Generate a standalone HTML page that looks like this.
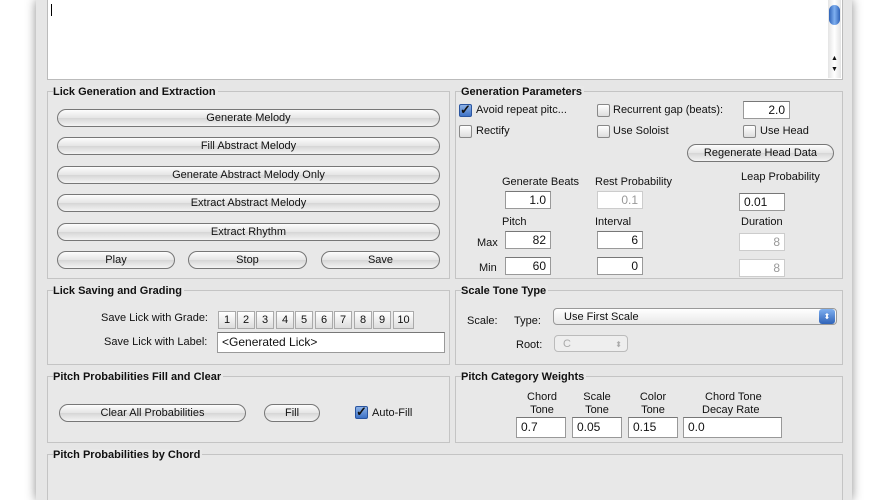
<!DOCTYPE html><html style="overflow:hidden"><head><style>
html,body{height:500px}
body{margin:0;width:888px;height:500px;overflow:hidden;background:#fff;font-family:"Liberation Sans",sans-serif;font-size:11px;color:#111;position:relative}
.a{position:absolute}
.win{left:36px;top:0;width:816px;height:500px;background:#e6e6e6;box-shadow:0 0 10px rgba(0,0,0,.45)}
.box{position:absolute;border:1px solid #c4c4c4;background:#e8e8e8;box-sizing:border-box}
.t{position:absolute;font-weight:bold;font-size:11px;background:#e8e8e8;padding-right:2px;left:5px;top:-6px}
.btn{position:absolute;height:16px;border:1px solid #777;border-radius:9px;background:linear-gradient(#fdfdfd,#e4e4e4 50%,#d6d6d6 51%,#f4f4f4);text-align:center;line-height:16px;font-size:11px}
.in{position:absolute;height:18px;background:#fff;border:1px solid #999;border-top-color:#777;box-sizing:border-box;line-height:16px;padding:0 4px;font-size:12px}
.r{text-align:right}.c{text-align:center}.dis{color:#999;border-color:#ccc}
.cb{position:absolute;width:11px;height:11px;border:1px solid #888;background:linear-gradient(#fff,#ddd);border-radius:2px}
.ck{background:linear-gradient(#8db2e6,#3d72c6);border-color:#2a55a0;color:#111;font-size:13px;line-height:9px;text-align:center;font-weight:bold}
.g{position:absolute;width:16px;height:16px;top:311px;border:1px solid #aaa;background:linear-gradient(#fff,#ddd);text-align:center;line-height:16px;font-size:11px}
</style></head><body>
<div class="a win"></div>
<div class="a" style="left:47px;top:0;width:796px;height:80px;background:#fff;border:1px solid #bbb;border-top:none;box-sizing:border-box"></div>
<div class="a" style="left:51px;top:4px;width:1px;height:12px;background:#000"></div>
<div class="a" style="left:828px;top:0;width:13px;height:78px;background:linear-gradient(90deg,#e4e4e4,#fff,#e4e4e4)"></div>
<div class="a" style="left:829px;top:5px;width:11px;height:20px;border-radius:6px;background:linear-gradient(90deg,#2f63b8,#7fb0f0,#2f63b8)"></div>
<div class="a" style="left:831px;top:55px;font-size:7px">▲</div><div class="a" style="left:831px;top:66px;font-size:7px">▼</div>

<div class="box" style="left:47px;top:91px;width:403px;height:188px"><div class="t">Lick Generation and Extraction</div></div>
<div class="btn" style="left:57px;top:109px;width:381px">Generate Melody</div>
<div class="btn" style="left:57px;top:137px;width:381px">Fill Abstract Melody</div>
<div class="btn" style="left:57px;top:166px;width:381px">Generate Abstract Melody Only</div>
<div class="btn" style="left:57px;top:194px;width:381px">Extract Abstract Melody</div>
<div class="btn" style="left:57px;top:223px;width:381px">Extract Rhythm</div>
<div class="btn" style="left:57px;top:251px;width:116px">Play</div>
<div class="btn" style="left:188px;top:251px;width:117px">Stop</div>
<div class="btn" style="left:321px;top:251px;width:117px">Save</div>

<div class="box" style="left:455px;top:91px;width:388px;height:188px"><div class="t">Generation Parameters</div></div>
<div class="cb ck" style="left:459px;top:104px">✓</div><div class="a" style="left:476px;top:104px">Avoid repeat pitc...</div>
<div class="cb" style="left:597px;top:104px"></div><div class="a" style="left:613px;top:104px">Recurrent gap (beats):</div>
<div class="in r" style="left:743px;top:101px;width:47px">2.0</div>
<div class="cb" style="left:459px;top:125px"></div><div class="a" style="left:476px;top:125px">Rectify</div>
<div class="cb" style="left:597px;top:125px"></div><div class="a" style="left:613px;top:125px">Use Soloist</div>
<div class="cb" style="left:743px;top:125px"></div><div class="a" style="left:760px;top:125px">Use Head</div>
<div class="btn" style="left:687px;top:144px;width:145px">Regenerate Head Data</div>
<div class="a" style="left:502px;top:176px">Generate Beats</div>
<div class="a" style="left:595px;top:176px">Rest Probability</div>
<div class="a" style="left:741px;top:171px">Leap Probability</div>
<div class="in r" style="left:505px;top:191px;width:46px">1.0</div>
<div class="in r dis" style="left:597px;top:191px;width:46px">0.1</div>
<div class="in" style="left:739px;top:193px;width:46px">0.01</div>
<div class="a" style="left:502px;top:216px">Pitch</div>
<div class="a" style="left:595px;top:216px">Interval</div>
<div class="a" style="left:741px;top:216px">Duration</div>
<div class="a" style="left:477px;top:237px">Max</div><div class="a" style="left:479px;top:262px">Min</div>
<div class="in r" style="left:505px;top:231px;width:46px">82</div>
<div class="in r" style="left:597px;top:231px;width:46px">6</div>
<div class="in r dis" style="left:739px;top:233px;width:46px">8</div>
<div class="in r" style="left:505px;top:257px;width:46px">60</div>
<div class="in r" style="left:597px;top:257px;width:46px">0</div>
<div class="in r dis" style="left:739px;top:259px;width:46px">8</div>

<div class="box" style="left:47px;top:290px;width:403px;height:75px"><div class="t">Lick Saving and Grading</div></div>
<div class="a" style="left:101px;top:312px">Save Lick with Grade:</div>
<div class="g" style="left:218px">1</div><div class="g" style="left:237px">2</div><div class="g" style="left:256px">3</div><div class="g" style="left:276px">4</div><div class="g" style="left:295px">5</div><div class="g" style="left:315px">6</div><div class="g" style="left:334px">7</div><div class="g" style="left:354px">8</div><div class="g" style="left:373px">9</div><div class="g" style="left:393px;width:19px">10</div>
<div class="a" style="left:104px;top:336px">Save Lick with Label:</div>
<div class="in" style="left:217px;top:332px;width:228px;height:21px;line-height:19px">&lt;Generated Lick&gt;</div>

<div class="box" style="left:455px;top:290px;width:388px;height:75px"><div class="t">Scale Tone Type</div></div>
<div class="a" style="left:467px;top:315px">Scale:</div><div class="a" style="left:514px;top:315px">Type:</div>
<div class="a" style="left:553px;top:308px;height:17px;border:1px solid #999;border-radius:4px;background:linear-gradient(#fff,#e8e8e8);line-height:17px;padding-left:10px;box-sizing:border-box;width:284px">Use First Scale</div>
<div class="a" style="left:819px;top:309px;width:16px;height:15px;border-radius:3px;background:linear-gradient(#7fb0f0,#2f63b8);color:#fff;font-size:8px;text-align:center;line-height:15px">⬍</div>
<div class="a" style="left:516px;top:339px">Root:</div>
<div class="a" style="left:554px;top:335px;width:74px;height:17px;border:1px solid #bbb;border-radius:4px;background:#eee;color:#aaa;line-height:17px;padding-left:8px;box-sizing:border-box">C<span style="position:absolute;right:5px;font-size:8px">⬍</span></div>

<div class="box" style="left:47px;top:376px;width:403px;height:67px"><div class="t">Pitch Probabilities Fill and Clear</div></div>
<div class="btn" style="left:59px;top:404px;width:185px">Clear All Probabilities</div>
<div class="btn" style="left:264px;top:404px;width:54px">Fill</div>
<div class="cb ck" style="left:355px;top:406px">✓</div><div class="a" style="left:372px;top:407px">Auto-Fill</div>

<div class="box" style="left:455px;top:376px;width:388px;height:67px"><div class="t">Pitch Category Weights</div></div>
<div class="a c" style="left:517px;top:391px;width:50px;line-height:13px">Chord<br>Tone</div>
<div class="a c" style="left:572px;top:391px;width:50px;line-height:13px">Scale<br>Tone</div>
<div class="a c" style="left:628px;top:391px;width:50px;line-height:13px">Color<br>Tone</div>
<div class="a" style="left:702px;top:391px;line-height:13px">&nbsp;Chord Tone<br>Decay Rate</div>
<div class="in" style="left:516px;top:417px;width:50px;height:21px;line-height:19px">0.7</div>
<div class="in" style="left:572px;top:417px;width:50px;height:21px;line-height:19px">0.05</div>
<div class="in" style="left:628px;top:417px;width:50px;height:21px;line-height:19px">0.15</div>
<div class="in" style="left:683px;top:417px;width:99px;height:21px;line-height:19px">0.0</div>

<div class="box" style="left:47px;top:454px;width:796px;height:46px;border-bottom:none"><div class="t">Pitch Probabilities by Chord</div></div>
</body></html>
